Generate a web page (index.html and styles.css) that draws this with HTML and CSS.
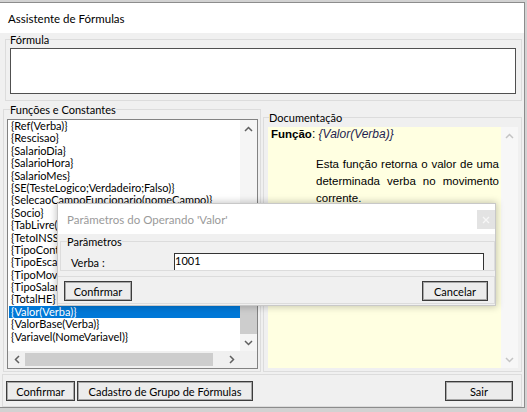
FILE: index.html
```html
<!DOCTYPE html>
<html lang="pt">
<head>
<meta charset="utf-8">
<title>Assistente de Fórmulas</title>
<link rel="stylesheet" href="styles.css">
</head>
<body>
<div class="window">
  <div class="titlebar">Assistente de Fórmulas</div>
  <div class="client">
    <fieldset class="group formula">
      <legend>Fórmula</legend>
      <div class="textarea"></div>
    </fieldset>
    <div class="row">
      <fieldset class="group funcs">
        <legend>Funções e Constantes</legend>
        <div class="listbox">
          <div class="list-main">
            <ul class="items">
              <li>{Ref(Verba)}</li>
              <li>{Rescisao}</li>
              <li>{SalarioDia}</li>
              <li>{SalarioHora}</li>
              <li>{SalarioMes}</li>
              <li>{SE(TesteLogico;Verdadeiro;Falso)}</li>
              <li>{SelecaoCampoFuncionario(nomeCampo)}</li>
              <li>{Socio}</li>
              <li>{TabLivre(Tabela;Linha;Coluna)}</li>
              <li>{TetoINSS}</li>
              <li>{TipoContrato}</li>
              <li>{TipoEscala}</li>
              <li>{TipoMovimento}</li>
              <li>{TipoSalario}</li>
              <li>{TotalHE}</li>
              <li class="sel">{Valor(Verba)}</li>
              <li>{ValorBase(Verba)}</li>
              <li>{Variavel(NomeVariavel)}</li>
            </ul>
            <div class="vscroll">
              <div class="arrow"><svg width="9" height="6" viewBox="0 0 9 6"><polyline points="1,5 4.5,1.5 8,5" fill="none" stroke="#606060" stroke-width="1.5"/></svg></div>
              <div class="track"><div class="track-space"></div><div class="thumb vthumb"></div></div>
              <div class="arrow"><svg width="9" height="6" viewBox="0 0 9 6"><polyline points="1,1 4.5,4.5 8,1" fill="none" stroke="#606060" stroke-width="1.5"/></svg></div>
            </div>
          </div>
          <div class="hrow">
            <div class="hscroll">
              <div class="arrow harrow"><svg width="6" height="9" viewBox="0 0 6 9"><polyline points="5,1 1.5,4.5 5,8" fill="none" stroke="#606060" stroke-width="1.5"/></svg></div>
              <div class="htrack"><div class="thumb hthumb"></div></div>
              <div class="arrow harrow"><svg width="6" height="9" viewBox="0 0 6 9"><polyline points="1,1 4.5,4.5 1,8" fill="none" stroke="#606060" stroke-width="1.5"/></svg></div>
            </div>
            <div class="corner"></div>
          </div>
        </div>
      </fieldset>
      <fieldset class="group docs">
        <legend>Documentação</legend>
        <div class="memo">
          <div class="memo-text">
            <div class="memo-head"><b>Função</b>: <i>{Valor(Verba)}</i></div>
            <p class="memo-par">Esta função retorna o valor de uma determinada verba no movimento corrente.</p>
          </div>
          <div class="vscroll memo-scroll">
            <div class="arrow"><svg width="9" height="6" viewBox="0 0 9 6"><polyline points="1,5 4.5,1.5 8,5" fill="none" stroke="#c4c4c4" stroke-width="1.5"/></svg></div>
            <div class="track"></div>
            <div class="arrow"><svg width="9" height="6" viewBox="0 0 9 6"><polyline points="1,1 4.5,4.5 8,1" fill="none" stroke="#c4c4c4" stroke-width="1.5"/></svg></div>
          </div>
        </div>
      </fieldset>
    </div>
    <div class="bottombar">
      <button class="btn btn-confirm">Confirmar</button>
      <button class="btn btn-cadastro">Cadastro de Grupo de Fórmulas</button>
      <button class="btn btn-sair">Sair</button>
    </div>
  </div>
</div>

<div class="dialog">
  <div class="dlg-title">
    <span>Parâmetros do Operando 'Valor'</span>
    <div class="dlg-close"><svg width="8" height="8" viewBox="0 0 8 8"><path d="M1 1L7 7M7 1L1 7" stroke="#f7f7f7" stroke-width="1.2"/></svg></div>
  </div>
  <fieldset class="group dlg-params">
    <legend>Parâmetros</legend>
    <div class="param-row">
      <span class="param-label">Verba :</span>
      <div class="param-input">1001</div>
    </div>
  </fieldset>
  <div class="dlg-buttons">
    <button class="btn dlg-confirm">Confirmar</button>
    <button class="btn dlg-cancel">Cancelar</button>
  </div>
</div>
</body>
</html>
```
FILE: styles.css
```css
* { box-sizing: border-box; }
html, body { margin: 0; padding: 0; }
body {
  width: 527px;
  height: 412px;
  overflow: hidden;
  position: relative;
  background: #d2d2d2;
  font-family: Lato, "Liberation Sans", sans-serif;
  font-size: 11px;
  color: #000;
}
.window {
  margin-top: 2px;
  width: 525px;
  height: 406px;
  border-top: 1px solid #8c8c8c;
  border-right: 1px solid #8c8c8c;
  border-bottom: 1px solid #8c8c8c;
  background: #f0f0f0;
  display: flex;
  flex-direction: column;
}
.titlebar {
  height: 30px;
  flex: none;
  background: #fff;
  padding-left: 8px;
  display: flex;
  align-items: center;
  font-size: 11.5px;
}
.client {
  flex: 1;
  display: flex;
  flex-direction: column;
}
.group {
  margin: 0;
  border: 1px solid #dcdcdc;
  min-width: 0;
}
.group legend {
  padding: 0;
  font-size: 11px;
  line-height: 13px;
}
.formula {
  margin-left: 5px;
  width: 517px;
  padding: 2px 5px 6px 4px;
}
.textarea {
  height: 46px;
  background: #fff;
  border: 1px solid #505050;
}
.row {
  display: flex;
  align-items: flex-start;
}
.funcs {
  margin: 2px 0 0 3px;
  width: 258px;
  padding: 3px 2px 2px 3px;
}
.funcs legend { margin-left: 3px; }
.listbox {
  width: 251px;
  height: 250px;
  border: 1px solid #828282;
  background: #fff;
  display: flex;
  flex-direction: column;
}
.list-main {
  flex: 1;
  display: flex;
  min-height: 0;
}
.items {
  flex: 1;
  list-style: none;
  margin: 0;
  padding: 0;
  overflow: hidden;
}
.items li {
  height: 12.4px;
  line-height: 12.4px;
  padding-left: 2px;
  margin-left: 1px;
  white-space: nowrap;
}
.items li.sel {
  background: #0078d7;
  color: #fff;
}
.vscroll {
  width: 17px;
  flex: none;
  display: flex;
  flex-direction: column;
  background: #f5f5f5;
}
.arrow {
  height: 17px;
  flex: none;
  display: flex;
  align-items: center;
  justify-content: center;
}
.track {
  flex: 1;
  display: flex;
  flex-direction: column;
}
.track-space { flex: 1; }
.thumb { background: #cdcdcd; }
.vthumb { height: 120px; }
.hrow {
  height: 17px;
  flex: none;
  display: flex;
}
.hscroll {
  flex: 1;
  display: flex;
  background: #f0f0f0;
}
.harrow { width: 17px; height: 17px; }
.htrack {
  flex: 1;
  display: flex;
  align-items: stretch;
  padding: 2px 0;
}
.hthumb { width: 188px; }
.corner {
  width: 17px;
  background: #f0f0f0;
}
.docs {
  margin: 10px 0 0 2px;
  width: 259px;
  padding: 3px 3px 3px 4px;
}
.docs legend { margin-left: 1px; }
.memo {
  height: 241px;
  display: flex;
}
.memo-text {
  flex: 1;
  background: #ffffe1;
  padding: 0 2px 0 3px;
  font-family: "Liberation Sans", Arial, sans-serif;
  font-size: 12px;
  overflow: hidden;
}
.memo-head {
  line-height: 14px;
}
.memo-head b { font-size: 11.5px; }
.memo-head i { color: #1e1e50; }
.memo-par {
  margin: 15px 0 0 45px;
  width: 183px;
  font-size: 11.5px;
  line-height: 17px;
  text-align: justify;
}
.memo-scroll { background: #f7f7f7; }
.bottombar {
  margin: 2px 0 0 2px;
  width: 520px;
  height: 33px;
  border: 1px solid #dcdcdc;
  display: flex;
  align-items: flex-start;
  gap: 2px;
  padding: 6px 8px 0 3px;
}
.btn {
  height: 20px;
  margin: 0;
  padding: 0;
  font-family: Lato, "Liberation Sans", sans-serif;
  font-size: 11px;
  color: #000;
  background: #ececec;
  border: 1px solid #3c3c3c;
  box-shadow: inset 0 0 0 1px #a8a8a8;
}
.btn-confirm { width: 69px; }
.btn-cadastro { width: 176px; }
.btn-sair { width: 68px; margin-left: auto; }

.dialog {
  position: absolute;
  left: 57px;
  top: 203px;
  width: 439px;
  height: 103px;
  background: #f0f0f0;
  border: 1px solid #c8c8c8;
  box-shadow: 0 0 7px 1px rgba(0, 0, 0, 0.22);
  display: flex;
  flex-direction: column;
}
.dlg-title {
  height: 30px;
  flex: none;
  background: #fff;
  display: flex;
  align-items: center;
  padding-left: 9px;
  color: #9a9a9a;
  font-size: 11.5px;
}
.dlg-close {
  margin-left: auto;
  align-self: flex-start;
  margin-top: 6px;
  width: 18px;
  height: 19px;
  background: #e3e3e3;
  display: flex;
  align-items: center;
  justify-content: center;
}
.dlg-params {
  margin: 1px 0 0 2px;
  height: 36px;
  padding: 0 10px 0 6px;
  overflow: hidden;
}
.param-row {
  display: grid;
  grid-template-columns: 103px 310px;
  margin-left: 4px;
  padding-top: 5px;
}
.param-label {
  line-height: 18px;
  padding-top: 1px;
}
.param-input {
  height: 20px;
  background: #fff;
  border: 1px solid #333;
  line-height: 13px;
  padding-left: 0;
}
.dlg-buttons {
  margin-top: 5px;
  border-top: 1px solid #dcdcdc;
  border-right: 1px solid #dcdcdc;
  border-bottom: 1px solid #dcdcdc;
  display: flex;
  justify-content: space-between;
  padding: 4px 6px 2px 6px;
}
.dlg-confirm { width: 68px; }
.dlg-cancel { width: 66px; }
```
